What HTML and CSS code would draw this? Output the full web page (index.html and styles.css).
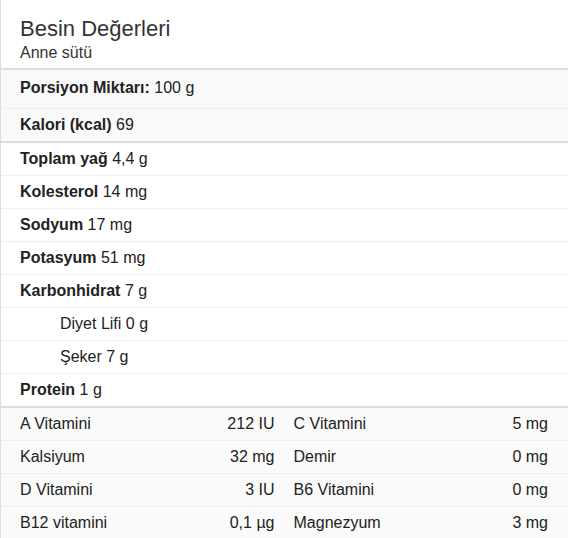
FILE: index.html
```html
<!DOCTYPE html>
<html lang="tr">
<head>
<meta charset="utf-8">
<link rel="stylesheet" href="styles.css">
</head>
<body>
<div class="card">
  <div class="head">
    <div class="title">Besin Değerleri</div>
    <div class="sub">Anne sütü</div>
  </div>
  <div class="group top">
    <div class="row serving"><b>Porsiyon Miktarı:</b> 100 g</div>
    <div class="row"><b>Kalori (kcal)</b> 69</div>
  </div>
  <div class="group mid">
    <div class="row"><b>Toplam yağ</b> 4,4 g</div>
    <div class="row"><b>Kolesterol</b> 14 mg</div>
    <div class="row"><b>Sodyum</b> 17 mg</div>
    <div class="row"><b>Potasyum</b> 51 mg</div>
    <div class="row"><b>Karbonhidrat</b> 7 g</div>
    <div class="row sub-row">Diyet Lifi 0 g</div>
    <div class="row sub-row">Şeker 7 g</div>
    <div class="row"><b>Protein</b> 1 g</div>
  </div>
  <div class="group vits">
    <div class="row vit"><div class="cell"><span>A Vitamini</span><span>212 IU</span></div><div class="cell"><span>C Vitamini</span><span>5 mg</span></div></div>
    <div class="row vit"><div class="cell"><span>Kalsiyum</span><span>32 mg</span></div><div class="cell"><span>Demir</span><span>0 mg</span></div></div>
    <div class="row vit"><div class="cell"><span>D Vitamini</span><span>3 IU</span></div><div class="cell"><span>B6 Vitamini</span><span>0 mg</span></div></div>
    <div class="row vit"><div class="cell"><span>B12 vitamini</span><span>0,1 µg</span></div><div class="cell"><span>Magnezyum</span><span>3 mg</span></div></div>
  </div>
</div>
</body>
</html>
```
FILE: styles.css
```css
html, body {
  margin: 0;
  padding: 0;
  background: #fff;
}
body {
  font-family: "Liberation Sans", Arial, sans-serif;
  font-size: 16px;
  color: #222;
  overflow: hidden;
}
.card {
  border-left: 1px solid #ddd;
}
.head {
  padding: 16px 20px 7px 19px;
  color: #333;
}
.title {
  font-size: 22px;
  line-height: 26px;
}
.sub {
  margin-top: 2px;
  font-size: 16px;
  line-height: 17px;
}
.group {
  border-top: 2px solid #ddd;
}
.row {
  line-height: 20px;
  padding: 6px 20px 6px 19px;
  border-top: 1px solid #eee;
}
.group .row:first-child {
  border-top: none;
}
.top .row {
  background: #f9f9f9;
}
.mid .row {
  background: #fff;
}
.vits .row {
  background: #fafafa;
}
.row.serving {
  padding-top: 8px;
  padding-bottom: 10px;
}
.row b {
  font-weight: bold;
}
.sub-row {
  padding-left: 59px;
}
.vit {
  display: grid;
  grid-template-columns: 1fr 1fr;
  column-gap: 19px;
}
.cell {
  display: flex;
  justify-content: space-between;
}
```
